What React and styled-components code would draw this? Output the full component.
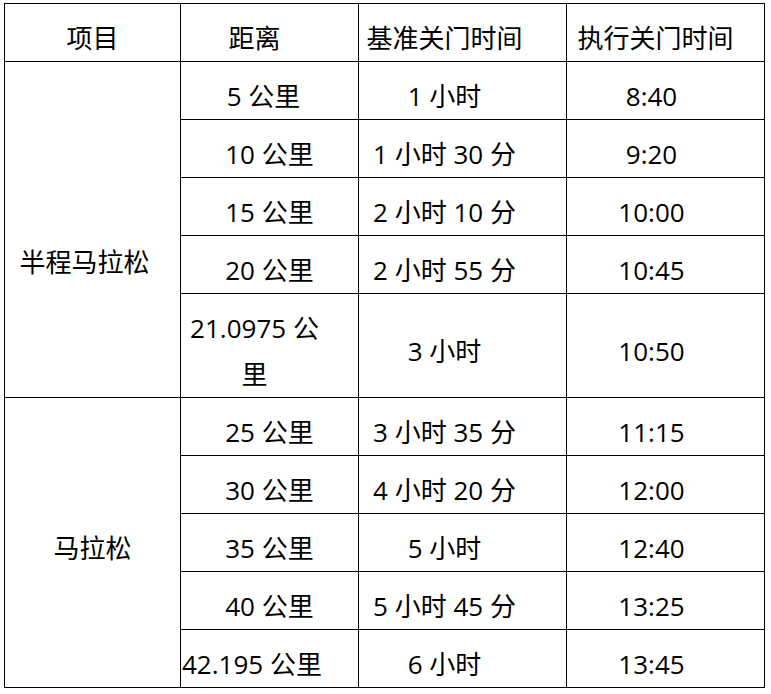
import React from "react";
import styled, { createGlobalStyle } from "styled-components";

const GlobalStyle = createGlobalStyle`
  html, body {
    margin: 0;
    background: #fff;
  }
  body {
    font-family: "Open Sans", "Noto Sans CJK SC", sans-serif;
    color: #000;
  }
`;

const Page = styled.div`
  padding: 3px 0 0 4px;
`;

const Table = styled.table`
  border-collapse: collapse;
  table-layout: fixed;
  width: 760px;
  font-size: 26px;
  line-height: 46px;
`;

const Col = styled.col`
  width: ${(p) => p.$w}px;
`;

const Row = styled.tr`
  height: 58px;
`;

// $shift moves the text centre left (negative) or right, $top pushes it down
const Cell = styled.td`
  border: 1px solid #000;
  padding-top: ${(p) => 11 + (p.$top || 0)}px;
  padding-bottom: 0;
  padding-left: ${(p) => (p.$left ? 1 : Math.max(0, 2 * (p.$shift || 0)))}px;
  padding-right: ${(p) => (p.$left ? 0 : Math.max(0, -2 * (p.$shift || 0)))}px;
  text-align: ${(p) => (p.$left ? "left" : "center")};
  vertical-align: middle;
  white-space: nowrap;
  font-weight: 400;
`;

const widths = [176, 178, 208, 198];

const header = [
  { t: "项目" },
  { t: "距离", s: -15 },
  { t: "基准关门时间", s: -18 },
  { t: "执行关门时间", s: -10 },
];

const groups = [
  {
    name: "半程马拉松",
    s: -8,
    top: 54,
    rows: [
      [{ t: "5 公里", s: -6 }, "1 小时", "8:40"],
      [{ t: "10 公里" }, "1 小时 30 分", "9:20"],
      [{ t: "15 公里" }, "2 小时 10 分", "10:00"],
      [{ t: "20 公里" }, "2 小时 55 分", "10:45"],
      [{ t: ["21.0975 公", "里"], s: -15 }, "3 小时", "10:50"],
    ],
  },
  {
    name: "马拉松",
    s: 0,
    top: 0,
    rows: [
      [{ t: "25 公里" }, "3 小时 35 分", "11:15"],
      [{ t: "30 公里" }, "4 小时 20 分", "12:00"],
      [{ t: "35 公里" }, "5 小时", "12:40"],
      [{ t: "40 公里" }, "5 小时 45 分", "13:25"],
      [{ t: "42.195 公里", left: true }, "6 小时", "13:45"],
    ],
  },
];

const renderText = (t) =>
  Array.isArray(t)
    ? t.map((line, i) => (
        <React.Fragment key={i}>
          {i > 0 && <br />}
          {line}
        </React.Fragment>
      ))
    : t;

export default function App() {
  return (
    <Page>
      <GlobalStyle />
      <Table>
        <colgroup>
          {widths.map((w, i) => (
            <Col key={i} $w={w} />
          ))}
        </colgroup>
        <thead>
          <Row>
            {header.map((h) => (
              <Cell as="th" key={h.t} $shift={h.s}>
                {h.t}
              </Cell>
            ))}
          </Row>
        </thead>
        <tbody>
          {groups.map((g) =>
            g.rows.map(([dist, base, exec], i) => (
              <Row key={g.name + i}>
                {i === 0 && (
                  <Cell rowSpan={g.rows.length} $shift={g.s} $top={g.top}>
                    {g.name}
                  </Cell>
                )}
                <Cell $shift={dist.s} $left={dist.left}>
                  {renderText(dist.t)}
                </Cell>
                <Cell $shift={-18}>{base}</Cell>
                <Cell $shift={-14}>{exec}</Cell>
              </Row>
            ))
          )}
        </tbody>
      </Table>
    </Page>
  );
}
